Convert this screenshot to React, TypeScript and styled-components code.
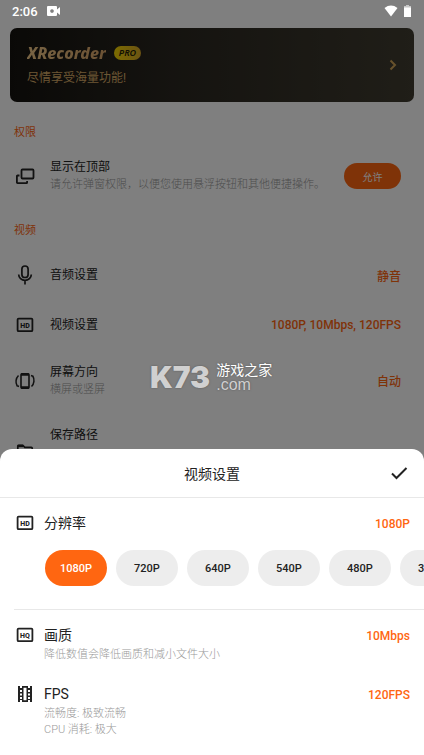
import React, { useState } from 'react';
import styled, { createGlobalStyle } from 'styled-components';

const GlobalStyle = createGlobalStyle`
  *, *::before, *::after { box-sizing: border-box; }
  body {
    margin: 0;
    background: #fff;
    color: #222;
    font-family: Roboto, "Noto Sans CJK SC", sans-serif;
    font-size: 12px;
  }
  button { border: 0; margin: 0; padding: 0; background: none; font: inherit; color: inherit; cursor: pointer; }
  h1, h2, h3, p { margin: 0; font-weight: 400; font-size: inherit; }
  svg { display: block; flex: none; }
`;

const Screen = styled.div`
  position: relative;
  height: 100vh;
  overflow: hidden;
`;

const StatusBar = styled.header`
  position: relative;
  z-index: 2;
  display: flex;
  align-items: center;
  justify-content: space-between;
  height: 22px;
  padding: 0 13px 0 12px;
  color: #fff;
  font-size: 13px;
  font-weight: 500;
`;

const StatusGroup = styled.div<{ $gap: number }>`
  display: flex;
  align-items: center;
  gap: ${(p) => p.$gap}px;
`;

const Banner = styled.section`
  display: flex;
  align-items: center;
  justify-content: space-between;
  height: 74px;
  margin: 6px 10px 0;
  padding: 0 16px 0 17px;
  border-radius: 7px;
  background: linear-gradient(90deg, #15130f 0%, #2a2720 40%, #403c30 100%);
  color: #d8ac68;
`;

const BannerText = styled.div`
  display: flex;
  flex-direction: column;
  gap: 6px;
`;

const Brand = styled.h1`
  display: flex;
  align-items: center;
  gap: 8px;
  font-family: "Noto Sans", sans-serif;
  font-size: 16px;
  font-style: italic;
  font-weight: 800;
  line-height: 20px;
`;

const BrandName = styled.span`
  background: linear-gradient(90deg, #f0c888, #d8a468);
  background-clip: text;
  color: transparent;
`;

const ProBadge = styled.span`
  padding: 0 5px;
  border-radius: 7px;
  background: linear-gradient(90deg, #f8d800, #d8a828);
  color: #221c08;
  font-size: 9px;
  font-weight: 600;
  line-height: 14px;
`;

const BannerLine = styled.p`
  line-height: 18px;
`;

const Group = styled.section<{ $top: number; $gap: number }>`
  display: flex;
  flex-direction: column;
  padding-top: ${(p) => p.$top}px;
  > h2 { margin-bottom: ${(p) => p.$gap}px; }
`;

const GroupTitle = styled.h2`
  padding: 0 14px;
  color: #ff6611;
  font-size: 11px;
  line-height: 20px;
`;

const Row = styled.div<{ $height: number }>`
  display: flex;
  align-items: center;
  gap: 14px;
  min-height: ${(p) => p.$height}px;
  padding: 0 23px 0 14px;
`;

const RowText = styled.div<{ $minHeight?: number }>`
  flex: 1;
  min-width: 0;
  min-height: ${(p) => p.$minHeight ?? 0}px;
`;

const RowTitle = styled.h3`
  line-height: 18px;
`;

const Hint = styled.p`
  color: #999;
  font-size: 11px;
  font-weight: 300;
  line-height: 18px;
  white-space: nowrap;
`;

const Value = styled.span`
  color: #ff6611;
  font-size: 12px;
  font-weight: 500;
`;

const AllowButton = styled.button`
  width: 57px;
  height: 26px;
  border-radius: 13px;
  background: #ff6611;
  color: #fff;
  font-size: 10px;
`;

const Scrim = styled.div`
  position: absolute;
  inset: 0;
  z-index: 1;
  background: rgba(0, 0, 0, 0.5);
`;

const Watermark = styled.div`
  position: absolute;
  top: 363px;
  left: 150px;
  z-index: 2;
  display: flex;
  align-items: center;
  gap: 6px;
  color: #d0d0d0;
  text-shadow: 0 0 2px #555;
`;

const WatermarkMark = styled.span`
  font-family: Inter, sans-serif;
  font-size: 30px;
  font-weight: 900;
  line-height: 28px;
`;

const WatermarkText = styled.span`
  display: flex;
  flex-direction: column;
`;

const WatermarkName = styled.span`
  color: #fff;
  font-size: 14px;
  line-height: 15px;
`;

const WatermarkDomain = styled.span`
  font-family: "Liberation Sans", sans-serif;
  font-size: 16px;
  line-height: 13px;
`;

const Sheet = styled.section`
  position: absolute;
  right: 0;
  bottom: 0;
  left: 0;
  z-index: 3;
  padding-bottom: 17px;
  border-radius: 12px 12px 0 0;
  background: #fff;
`;

const SheetHeader = styled.header`
  display: grid;
  grid-template-columns: 1fr auto 1fr;
  align-items: center;
  height: 49px;
  padding: 0 15px;
  border-bottom: 1px solid #e8e8e8;
`;

const SheetTitle = styled.h2`
  grid-column: 2;
  font-size: 14px;
`;

const ConfirmButton = styled.button`
  justify-self: end;
`;

const Option = styled.div`
  display: flex;
  align-items: flex-start;
  gap: 8px;
  padding: 14px 14px 0;
  & + & { padding-top: 20px; }
`;

const OptionText = styled.div`
  flex: 1;
  ${Hint} { line-height: 16px; }
`;

const OptionTitle = styled.h3`
  margin-bottom: 1px;
  font-size: 14px;
  line-height: 22px;
`;

const OptionValue = styled(Value)`
  line-height: 24px;
`;

const Chips = styled.div`
  display: flex;
  gap: 9px;
  margin-top: 14px;
  padding: 0 14px 0 45px;
  overflow: hidden;
`;

const Chip = styled.button<{ $active: boolean }>`
  flex: none;
  width: 62px;
  height: 36px;
  border-radius: 18px;
  background: ${(p) => (p.$active ? '#ff6611' : '#ededed')};
  color: ${(p) => (p.$active ? '#fff' : '#222')};
  font-size: 11px;
  font-weight: 500;
`;

const Divider = styled.hr`
  height: 1px;
  margin: 23px 0 0 14px;
  border: 0;
  background: #e8e8e8;
`;

const IconSvg = styled.svg`
  width: 22px;
  height: 22px;
  fill: none;
  stroke: #222;
  stroke-width: 2;
  text {
    fill: #222;
    stroke: none;
    font-family: Roboto, sans-serif;
    font-size: 7px;
    font-weight: 800;
  }
`;

const Icon = ({ children }: { children: React.ReactNode }) => (
  <IconSvg viewBox="0 0 22 22" aria-hidden="true">{children}</IconSvg>
);

const WindowsIcon = () => (
  <Icon>
    <rect x="7.5" y="4.5" width="12" height="9" rx="1" strokeWidth="1.8" />
    <path d="M5.500 10.500H3.500a.6.6 0 0 0-.6.6v6.400a.6.6 0 0 0 .6.6H12.500a.6.6 0 0 0 .6-.6V16" strokeWidth="1.800" />
  </Icon>
);

const MicIcon = () => (
  <Icon>
    <rect x="7.900" y="2" width="6.200" height="11.500" rx="3.100" strokeWidth="1.700" />
    <path d="M4.700 10.500a6.300 5.800 0 0 0 12.600 0M11 16.300V20.500" strokeWidth="1.700" />
  </Icon>
);

const QualityIcon = ({ label }: { label: string }) => (
  <Icon>
    <rect x="3.600" y="4.600" width="14.800" height="12.600" rx="1" strokeWidth="1.800" />
    <text x="11" y="13.500" textAnchor="middle">{label}</text>
  </Icon>
);

const RotateIcon = () => (
  <Icon>
    <rect x="7" y="3.800" width="8" height="14.400" rx="1" strokeWidth="1.600" />
    <path d="M7 4.500h8M7 17.500h8" strokeWidth="2.400" />
    <path d="M4.500 5.500C1.500 8.500 1.500 13 3 15.500M5 16.500 2.500 15.500M17.500 16.500C20.500 13.500 20.500 9 19 6.500M17 5.500l2.500 1" strokeWidth="1.500" />
  </Icon>
);

const FolderIcon = () => (
  <Icon>
    <path d="M3.800 17.500V5.200q0-.8.8-.8h4.200l2 2h6.600q.8 0 .8.8v10.300z" strokeWidth="1.700" />
    <path d="M3.500 5h5.500" strokeWidth="2.400" />
  </Icon>
);

const FilmIcon = () => (
  <Icon>
    <path fill="#222" stroke="none" fillRule="evenodd" d="M4 3h2v2h2V3h6v2h2V3h2v16h-2v-2h-2v2H8v-2H6v2H4zM6 7v2h2V7zm0 3.500v2h2v-2zM6 14v2h2v-2zM14 7v2h2V7zm0 3.500v2h2v-2zm0 3.500v2h2v-2zM9.500 4.800v12.400h3V4.800z" />
  </Icon>
);

const resolutions = ['1080P', '720P', '640P', '540P', '480P', '360P'];

export default function App() {
  const [resolution, setResolution] = useState('1080P');

  return (
    <>
      <GlobalStyle />
      <Screen>
        <StatusBar>
          <StatusGroup $gap={8}>
            <span>2:06</span>
            <svg width="15" height="12" viewBox="0 0 15 12" aria-hidden="true">
              <path fill="#fff" fillRule="evenodd" d="M2 1h8q1 0 1 1v2.500L14 2v8l-3-2.500V10q0 1-1 1H2q-1 0-1-1V2q0-1 1-1zM6 4.200a1.800 1.800 0 1 0 .01 0z" />
            </svg>
          </StatusGroup>
          <StatusGroup $gap={6}>
            <svg width="14" height="12" viewBox="0 0 14 12" aria-hidden="true">
              <path fill="#fff" d="M.5 3Q7-1.800 13.500 3L7 11.500z" />
            </svg>
            <svg width="7" height="12" viewBox="0 0 7 12" aria-hidden="true">
              <path fill="#c8c8c8" d="M2 0h3v1h2v2H0V1h2z" />
              <path fill="#fff" d="M0 2.500h7V12H0z" />
            </svg>
          </StatusGroup>
        </StatusBar>

        <main>
          <Banner>
            <BannerText>
              <Brand>
                <BrandName>XRecorder</BrandName>
                <ProBadge>PRO</ProBadge>
              </Brand>
              <BannerLine>尽情享受海量功能!</BannerLine>
            </BannerText>
            <button type="button" aria-label="XRecorder PRO">
              <svg width="10" height="12" viewBox="0 0 10 12" fill="none" stroke="#d0a458" strokeWidth="2">
                <path d="m2.500 1.500 4.500 4.500-4.500 4.500" />
              </svg>
            </button>
          </Banner>

          <Group $top={21} $gap={3}>
            <GroupTitle>权限</GroupTitle>
            <Row $height={60}>
              <WindowsIcon />
              <RowText>
                <RowTitle>显示在顶部</RowTitle>
                <Hint>请允许弹窗权限，以便您使用悬浮按钮和其他便捷操作。</Hint>
              </RowText>
              <AllowButton type="button">允许</AllowButton>
            </Row>
          </Group>

          <Group $top={15} $gap={9}>
            <GroupTitle>视频</GroupTitle>
            <Row $height={50}>
              <MicIcon />
              <RowText><RowTitle>音频设置</RowTitle></RowText>
              <Value>静音</Value>
            </Row>
            <Row $height={50}>
              <QualityIcon label="HD" />
              <RowText><RowTitle>视频设置</RowTitle></RowText>
              <Value>1080P, 10Mbps, 120FPS</Value>
            </Row>
            <Row $height={61}>
              <RotateIcon />
              <RowText>
                <RowTitle>屏幕方向</RowTitle>
                <Hint>横屏或竖屏</Hint>
              </RowText>
              <Value>自动</Value>
            </Row>
            <Row $height={82}>
              <FolderIcon />
              <RowText $minHeight={52}><RowTitle>保存路径</RowTitle></RowText>
            </Row>
          </Group>
        </main>

        <Scrim />

        <Watermark>
          <WatermarkMark>K73</WatermarkMark>
          <WatermarkText>
            <WatermarkName>游戏之家</WatermarkName>
            <WatermarkDomain>.com</WatermarkDomain>
          </WatermarkText>
        </Watermark>

        <Sheet role="dialog" aria-labelledby="sheet-title">
          <SheetHeader>
            <SheetTitle id="sheet-title">视频设置</SheetTitle>
            <ConfirmButton type="button" aria-label="确定">
              <svg width="20" height="20" viewBox="0 0 20 20" fill="none" stroke="#222" strokeWidth="2">
                <path d="m3 10.500 4.500 4.500L17.500 5" />
              </svg>
            </ConfirmButton>
          </SheetHeader>

          <Option>
            <QualityIcon label="HD" />
            <OptionText><OptionTitle>分辨率</OptionTitle></OptionText>
            <OptionValue>{resolution}</OptionValue>
          </Option>
          <Chips role="group" aria-label="分辨率">
            {resolutions.map((item) => (
              <Chip
                key={item}
                type="button"
                $active={item === resolution}
                aria-pressed={item === resolution}
                onClick={() => setResolution(item)}
              >
                {item}
              </Chip>
            ))}
          </Chips>
          <Divider />

          <Option>
            <QualityIcon label="HQ" />
            <OptionText>
              <OptionTitle>画质</OptionTitle>
              <Hint>降低数值会降低画质和减小文件大小</Hint>
            </OptionText>
            <OptionValue>10Mbps</OptionValue>
          </Option>
          <Option>
            <FilmIcon />
            <OptionText>
              <OptionTitle>FPS</OptionTitle>
              <Hint>流畅度: 极致流畅</Hint>
              <Hint>CPU 消耗: 极大</Hint>
            </OptionText>
            <OptionValue>120FPS</OptionValue>
          </Option>
        </Sheet>
      </Screen>
    </>
  );
}
